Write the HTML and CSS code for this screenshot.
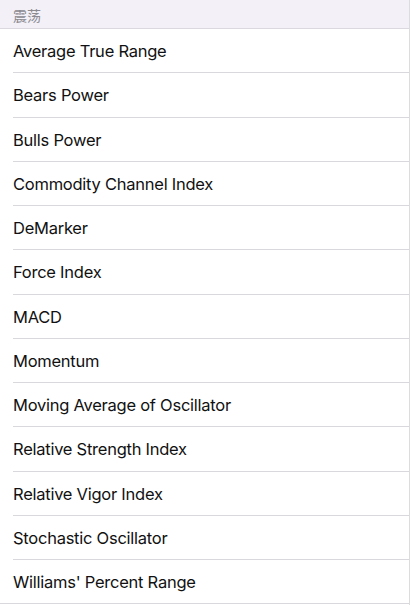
FILE: index.html
```html
<!DOCTYPE html>
<html lang="zh">
<head>
    <meta charset="UTF-8">
    <meta name="viewport" content="width=device-width, initial-scale=1.0">
    <title>震荡</title>
    <link rel="stylesheet" href="styles.css">
</head>
<body>
    <div class="list">
        <div class="section-header">震荡</div>
        <div class="rows">
            <div class="row">Average True Range</div>
            <div class="row">Bears Power</div>
            <div class="row">Bulls Power</div>
            <div class="row">Commodity Channel Index</div>
            <div class="row">DeMarker</div>
            <div class="row">Force Index</div>
            <div class="row">MACD</div>
            <div class="row">Momentum</div>
            <div class="row">Moving Average of Oscillator</div>
            <div class="row">Relative Strength Index</div>
            <div class="row">Relative Vigor Index</div>
            <div class="row">Stochastic Oscillator</div>
            <div class="row last">Williams' Percent Range</div>
        </div>
    </div>
</body>
</html>
```

FILE: styles.css
```css
/* General Styles */
body {
    margin: 0;
    background: #fff;
    font-family: 'Inter', 'Noto Sans CJK SC', sans-serif;
    color: #111;
}

.list {
    height: 605px;
    box-sizing: border-box;
    border-right: 1px solid #dcdcdf;
    overflow: hidden;
}

.section-header {
    height: 29px;
    box-sizing: border-box;
    padding-left: 13px;
    padding-top: 1px;
    display: flex;
    align-items: center;
    background: #f3f0f7;
    border-bottom: 1px solid #dcd8e0;
    font-size: 14px;
    color: #8a8a8f;
}

.row {
    height: 44.25px;
    box-sizing: border-box;
    margin-left: 13px;
    padding-top: 1px;
    display: flex;
    align-items: center;
    border-bottom: 1px solid #d9d9dd;
    font-size: 16.5px;
    letter-spacing: -0.25px;
}

.row.last {
    margin-left: 0;
    padding-left: 13px;
}
```
